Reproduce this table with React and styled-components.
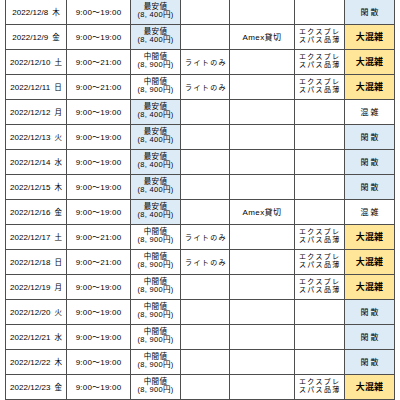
import React from "react";
import styled, { createGlobalStyle } from "styled-components";

const Global = createGlobalStyle`
  html, body { margin: 0; padding: 0; background: #fff; }
  body { overflow: hidden; width: 400px; height: 400px; }
`;

const Sheet = styled.div`
  padding: 0 0 0 5px;
  margin-top: -1px;
`;

const Table = styled.table`
  border-collapse: separate;
  border-spacing: 1px;
  background: #4e4e4e;
  table-layout: fixed;
  width: 390px;
  font-family: "Liberation Sans", "Noto Sans CJK JP", sans-serif;
  color: #000;
`;

const Cell = styled.td`
  height: 24px;
  padding: 0;
  background: ${(p) => (p.$fill === "blue" ? "#ddebf7" : p.$fill === "yellow" ? "#ffe699" : "#fff")};
  text-align: ${(p) => p.$align || "center"};
  padding-left: ${(p) => (p.$align === "left" ? "4px" : "0")};
  vertical-align: middle;
  font-size: 8px;
  line-height: 9px;
  white-space: nowrap;
  overflow: hidden;
`;

const DateText = styled.span`
  font-size: 8px;
  letter-spacing: 0.05px;
`;

const Weekday = styled.span`
  font-size: 7.5px;
  margin-left: 4px;
`;

const TimeText = styled.span`
  letter-spacing: 0.2px;
`;

const Stack = styled.div`
  display: flex;
  flex-direction: column;
  align-items: ${(p) => (p.$left ? "flex-start" : "center")};
  font-size: ${(p) => (p.$left ? "7px" : "7.5px")};
  line-height: ${(p) => (p.$left ? "8px" : "8.5px")};
  margin-top: -1.5px;
  letter-spacing: ${(p) => (p.$left ? "1.3px" : "0.3px")};
`;

const Wide = styled.span`
  font-size: 7px;
  letter-spacing: 1.4px;
`;

const Amex = styled.span`
  letter-spacing: 0.4px;
`;

const Status = styled.span`
  font-size: ${(p) => (p.$bold ? "9px" : "8px")};
  font-weight: ${(p) => (p.$bold ? 700 : 400)};
  letter-spacing: ${(p) => (p.$bold ? "0.1px" : "2px")};
  margin-right: ${(p) => (p.$bold ? "0" : "-2px")};
`;

const LOW = "low";
const MID = "mid";

const rows = [
  ["2022/12/8", "木", "9:00～19:00", LOW, false, false, false, "閑散"],
  ["2022/12/9", "金", "9:00～19:00", LOW, false, true, true, "大混雑"],
  ["2022/12/10", "土", "9:00～21:00", MID, true, false, true, "大混雑"],
  ["2022/12/11", "日", "9:00～21:00", MID, true, false, true, "大混雑"],
  ["2022/12/12", "月", "9:00～19:00", LOW, false, false, false, "混雑"],
  ["2022/12/13", "火", "9:00～19:00", LOW, false, false, false, "閑散"],
  ["2022/12/14", "水", "9:00～19:00", LOW, false, false, false, "閑散"],
  ["2022/12/15", "木", "9:00～19:00", LOW, false, false, false, "閑散"],
  ["2022/12/16", "金", "9:00～19:00", LOW, false, true, false, "混雑"],
  ["2022/12/17", "土", "9:00～21:00", MID, true, false, true, "大混雑"],
  ["2022/12/18", "日", "9:00～21:00", MID, true, false, true, "大混雑"],
  ["2022/12/19", "月", "9:00～19:00", MID, false, false, true, "大混雑"],
  ["2022/12/20", "火", "9:00～19:00", MID, false, false, false, "閑散"],
  ["2022/12/21", "水", "9:00～19:00", MID, false, false, false, "閑散"],
  ["2022/12/22", "木", "9:00～19:00", MID, false, false, false, "閑散"],
  ["2022/12/23", "金", "9:00～19:00", MID, false, false, true, "大混雑"],
];

const statusFill = { 閑散: "blue", 大混雑: "yellow", 混雑: "white" };

export default function App() {
  return (
    <>
      <Global />
      <Sheet>
        <Table>
          <colgroup>
            <col style={{ width: 60 }} />
            <col style={{ width: 63 }} />
            <col style={{ width: 49 }} />
            <col style={{ width: 48 }} />
            <col style={{ width: 64 }} />
            <col style={{ width: 49 }} />
            <col style={{ width: 49 }} />
          </colgroup>
          <tbody>
            {rows.map(([d, wd, time, price, light, amex, exp, status]) => (
              <tr key={d}>
                <Cell>
                  <DateText>{d}</DateText>
                  <Weekday>{wd}</Weekday>
                </Cell>
                <Cell>
                  <TimeText>{time}</TimeText>
                </Cell>
                <Cell $fill={price === LOW ? "blue" : "white"}>
                  <Stack>
                    <span>{price === LOW ? "最安値" : "中間値"}</span>
                    <span>{price === LOW ? "(8, 400円)" : "(8, 900円)"}</span>
                  </Stack>
                </Cell>
                <Cell $align="left">{light && <Wide>ライトのみ</Wide>}</Cell>
                <Cell>{amex && <Amex>Amex貸切</Amex>}</Cell>
                <Cell $align="left">
                  {exp && (
                    <Stack $left>
                      <span>エクスプレ</span>
                      <span>スパス品薄</span>
                    </Stack>
                  )}
                </Cell>
                <Cell $fill={statusFill[status]}>
                  <Status $bold={status === "大混雑"}>{status}</Status>
                </Cell>
              </tr>
            ))}
          </tbody>
        </Table>
      </Sheet>
    </>
  );
}
